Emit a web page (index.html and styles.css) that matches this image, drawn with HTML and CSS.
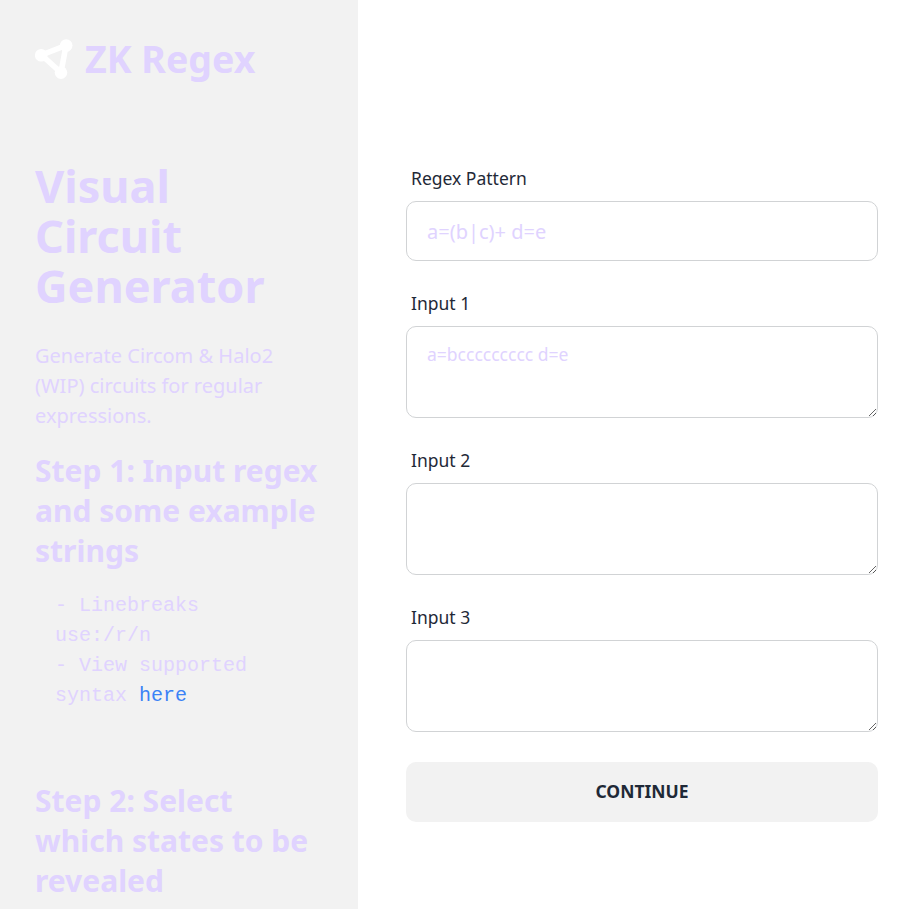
FILE: index.html
```html
<!DOCTYPE html>
<html lang="en">
<head>
<meta charset="utf-8">
<title>ZK Regex</title>
<link rel="stylesheet" href="styles.css">
</head>
<body>
<div class="layout">
  <aside class="sidebar">
    <div class="logo">
      <svg class="logo-icon" viewBox="0 0 40 40" width="40" height="40" fill="none" stroke="#fff" stroke-width="5.6">
        <path d="M6.5 16 31 6.5 26 33.5Z"/>
        <g fill="#fff" stroke="none"><circle cx="6.2" cy="16.3" r="6.3"/><circle cx="31.2" cy="6.5" r="6.3"/><circle cx="26" cy="33.6" r="6.3"/></g>
      </svg>
      <span>ZK Regex</span>
    </div>
    <h1>Visual Circuit Generator</h1>
    <p class="lead">Generate Circom &amp; Halo2 (WIP) circuits for regular expressions.</p>
    <h2>Step 1: Input regex and some example strings</h2>
    <p class="notes">- Linebreaks use:/r/n<br>- View supported syntax <a href="#">here</a></p>
    <h2>Step 2: Select which states to be revealed</h2>
  </aside>
  <main class="content">
    <form class="form">
      <div class="field"><label for="regex">Regex Pattern</label><input id="regex" type="text" placeholder="a=(b|c)+ d=e"></div>
      <div class="field"><label for="input1">Input 1</label><textarea id="input1" placeholder="a=bccccccccc d=e"></textarea></div>
      <div class="field"><label for="input2">Input 2</label><textarea id="input2"></textarea></div>
      <div class="field"><label for="input3">Input 3</label><textarea id="input3"></textarea></div>
      <button type="button">CONTINUE</button>
    </form>
  </main>
</div>
</body>
</html>
```
FILE: styles.css
```css
* { box-sizing: border-box; }
body { margin: 0; height: 100vh; overflow: hidden; font-family: "Noto Sans", sans-serif; color: #1f2937; background: #fff; }
.layout { display: flex; height: 100vh; }
.sidebar { width: 358px; flex: none; padding: 29px 35px 0; overflow: hidden; background: #f2f2f2; color: #e0d3ff; }
.logo { display: flex; align-items: center; gap: 10px; height: 60px; font-size: 37.5px; line-height: 60px; font-weight: 700; }
.logo-icon { flex: none; }
h1 { margin: 72px 0 0; font-size: 45px; line-height: 50px; font-weight: 700; }
.lead { margin: 30px 0 0; font-size: 20px; line-height: 30px; }
h2 { margin: 20px 0 0; font-size: 30px; line-height: 40px; font-weight: 700; }
.notes { margin: 20px 0 70px; padding: 0 20px; font: 20px/30px "Liberation Mono", monospace; }
.notes a { color: #3b82f6; text-decoration: none; }
.content { flex: 1; padding: 164px 41px 0 48px; }
.form { display: flex; flex-direction: column; }
.field { display: flex; flex-direction: column; margin-bottom: 28px; }
label { margin: 0 0 8px 5px; font-size: 17.5px; line-height: 29px; }
input, textarea { display: block; width: 100%; margin: 0; border: 1px solid #d1d3d5; border-radius: 10px; background: #fff; color: #1f2937; font-family: inherit; }
input { height: 60px; padding: 0 20px; font-size: 20px; }
textarea { height: 92px; padding: 15px 20px; font-size: 17.5px; resize: vertical; }
::placeholder { color: #e0d3ff; opacity: 1; }
button { height: 60px; margin-top: 2px; padding: 0 0 2px; border: 0; border-radius: 10px; background: #f2f2f2; color: #1f2937; font: 700 17.5px "Noto Sans", sans-serif; }
```
